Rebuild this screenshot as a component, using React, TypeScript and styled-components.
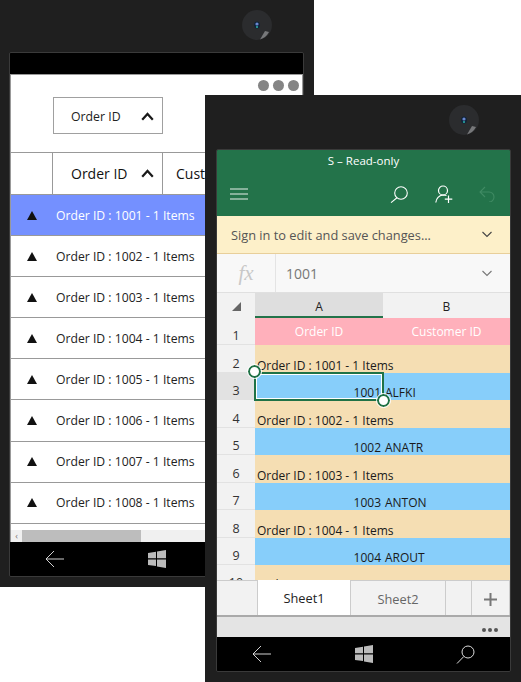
import styled, { createGlobalStyle } from "styled-components";

const GlobalStyle = createGlobalStyle`
  html, body {
    margin: 0;
    padding: 0;
    background: #fff;
    font-family: "Open Sans", "Noto Sans", sans-serif;
  }
`;

const Desktop = styled.div`
  position: relative;
  width: 521px;
  height: 682px;
  overflow: hidden;
  background: #fff;
`;

const Phone = styled.div<{ $x: number; $y: number; $w: number; $h: number }>`
  position: absolute;
  left: ${(p) => p.$x}px;
  top: ${(p) => p.$y}px;
  width: ${(p) => p.$w}px;
  height: ${(p) => p.$h}px;
  box-sizing: border-box;
  background: #1f1f1f;
  display: flex;
  flex-direction: column;
`;

const Camera = styled.svg`
  position: absolute;
  right: 42px;
  top: 10px;
  width: 30px;
  height: 30px;
`;

const Screen = styled.div<{ $left: number; $top: number; $w: number; $h: number }>`
  margin: ${(p) => p.$top}px 0 0 ${(p) => p.$left}px;
  width: ${(p) => p.$w}px;
  height: ${(p) => p.$h}px;
  box-sizing: border-box;
  border: 1px solid #3a3a3a;
  border-radius: 2px;
  overflow: hidden;
  display: flex;
  flex-direction: column;
`;

const NavBar = styled.div`
  background: #000;
  height: 34px;
  flex: none;
  display: grid;
  grid-template-columns: repeat(3, 102px);
  justify-content: center;
  align-items: center;
  justify-items: center;
`;

const StatusBar = styled.div`
  background: #000;
  height: 21px;
  flex: none;
`;

const GridApp = styled.div`
  flex: 1;
  min-height: 0;
  background: #fff;
  border: 1px solid #999;
  border-bottom: 0;
  display: flex;
  flex-direction: column;
  overflow: hidden;
`;

const Toolbar = styled.div`
  height: 77px;
  flex: none;
  position: relative;
  padding: 22px 0 0 42px;
  box-sizing: border-box;
`;

const Dots = styled.div`
  position: absolute;
  top: 5px;
  right: 3px;
  display: flex;
  gap: 4px;
`;

const Dot = styled.span`
  width: 11px;
  height: 11px;
  border-radius: 50%;
  background: #858585;
`;

const GroupChip = styled.div`
  width: 110px;
  height: 37px;
  box-sizing: border-box;
  border: 1px solid #a0a0a0;
  display: flex;
  align-items: center;
  justify-content: space-between;
  padding: 1px 8px 0 17px;
  font-size: 12.3px;
  color: #222;
`;

const HeaderRow = styled.div`
  height: 42px;
  flex: none;
  border-top: 1px solid #999;
  box-sizing: border-box;
  display: flex;
  width: 600px;
`;

const HeaderCell = styled.div<{ $w: number; $pad?: number }>`
  width: ${(p) => p.$w}px;
  flex: none;
  box-sizing: border-box;
  border-right: 1px solid #999;
  display: flex;
  align-items: center;
  justify-content: space-between;
  padding: 0 8px 0 ${(p) => p.$pad ?? 0}px;
  font-size: 14px;
  color: #111;
  white-space: nowrap;
`;

const GroupRow = styled.div<{ $selected?: boolean }>`
  height: 41.1px;
  flex: none;
  box-sizing: border-box;
  border-top: 1px solid #999;
  background: ${(p) => (p.$selected ? "#7490ff" : "#fff")};
  color: ${(p) => (p.$selected ? "#fff" : "#222")};
  display: flex;
  align-items: center;
  padding-left: 16px;
  font-size: 12.2px;
  white-space: nowrap;
`;

const Triangle = styled.span`
  width: 0;
  height: 0;
  border-left: 5px solid transparent;
  border-right: 5px solid transparent;
  border-bottom: 9px solid #111;
  margin-right: 19px;
`;

const ListEnd = styled.div`
  flex: 1;
  border-top: 1px solid #999;
`;

const ScrollBar = styled.div`
  height: 12px;
  flex: none;
  background: #f0f0f0;
  display: flex;
  align-items: center;
`;

const ScrollArrow = styled.span`
  width: 11px;
  font-size: 9px;
  line-height: 12px;
  text-align: center;
  color: #777;
`;

const ScrollThumb = styled.div`
  width: 119px;
  height: 12px;
  background: #bdbdbd;
`;

const TitleBar = styled.div`
  background: #23734a;
  color: #fff;
  height: 66px;
  flex: none;
  display: flex;
  flex-direction: column;
`;

const TitleText = styled.div`
  text-align: center;
  font-size: 11.5px;
  line-height: 21px;
`;

const TitleActions = styled.div`
  display: flex;
  align-items: center;
  padding: 14px 15px 0 13px;
`;

const ActionSpacer = styled.div`
  flex: 1;
`;

const UserAction = styled.svg`
  margin-left: 27px;
`;

const UndoAction = styled.svg`
  margin-left: 26px;
`;

const SignInBar = styled.div`
  height: 38px;
  flex: none;
  box-sizing: border-box;
  background: #fdf0c9;
  border-bottom: 1px solid #e8cf9a;
  display: flex;
  align-items: center;
  justify-content: space-between;
  padding: 0 18px 0 14px;
  font-size: 12.8px;
  color: #555;
`;

const FormulaBar = styled.div`
  height: 38px;
  flex: none;
  background: #f8f8f8;
  display: flex;
  align-items: center;
`;

const FxBox = styled.div`
  width: 59px;
  height: 100%;
  box-sizing: border-box;
  border-right: 1px solid #e4e4e4;
  display: flex;
  align-items: center;
  justify-content: center;
  font-family: "Liberation Serif", serif;
  font-style: italic;
  font-size: 21px;
  color: #c8c8c8;
`;

const FormulaValue = styled.div`
  flex: 1;
  padding-left: 10px;
  font-size: 14px;
  color: #777;
`;

const FormulaChevron = styled.div`
  padding-right: 18px;
  display: flex;
`;

const Sheet = styled.div`
  flex: 1;
  min-height: 0;
  overflow: hidden;
  display: grid;
  grid-template-columns: 38px 128px 127px;
  grid-auto-rows: 27.45px;
  grid-template-rows: 25px;
  border-top: 1px solid #e0e0e0;
  background: #f2f2f2;
  font-size: 12px;
  color: #222;
`;

const Corner = styled.div`
  display: flex;
  align-items: center;
  justify-content: center;
  background: #f2f2f2;
`;

const ColumnHead = styled.div<{ $active?: boolean }>`
  background: ${(p) => (p.$active ? "#dedede" : "#f2f2f2")};
  border-bottom: 2px solid ${(p) => (p.$active ? "#23734a" : "#f2f2f2")};
  display: flex;
  align-items: center;
  justify-content: center;
  padding-top: 3px;
  box-sizing: border-box;
  font-size: 12px;
  color: #222;
`;

const RowHead = styled.div<{ $active?: boolean }>`
  background: ${(p) => (p.$active ? "#e2e2e2" : "#f2f2f2")};
  border-bottom: 1px solid #e2e2e2;
  box-sizing: border-box;
  display: flex;
  align-items: flex-end;
  justify-content: center;
  line-height: 16px;
  font-size: 12.5px;
  color: #333;
`;

const Cell = styled.div<{ $bg: string; $align?: string; $color?: string; $span?: number; $selected?: boolean }>`
  position: relative;
  grid-column: span ${(p) => p.$span ?? 1};
  z-index: ${(p) => (p.$selected ? 2 : "auto")};
  background: ${(p) => p.$bg};
  color: ${(p) => p.$color ?? "#1a1a1a"};
  display: flex;
  align-items: flex-end;
  justify-content: ${(p) => p.$align ?? "flex-start"};
  padding: 0 2px;
  box-sizing: border-box;
  white-space: nowrap;
  line-height: 16px;
`;

const CellText = styled.span`
  padding-bottom: 0;
  transform: translateY(1px);
`;

const HeadCellLabel = styled.div`
  width: 100%;
  text-align: center;
  padding-bottom: 5px;
`;

const Selection = styled.div`
  position: absolute;
  inset: -1px;
  border: 2px solid #1f7246;
  box-shadow: inset 0 0 0 1px #fff;
  pointer-events: none;
`;

const Handle = styled.span<{ $end?: boolean }>`
  position: absolute;
  width: 9px;
  height: 9px;
  border: 2px solid #1f7246;
  outline: 1px solid #fff;
  border-radius: 50%;
  background: #fff;
  ${(p) => (p.$end ? "right: -7.5px; bottom: -7.5px;" : "left: -8.5px; top: -8.5px;")}
`;

const TabBar = styled.div`
  height: 37px;
  flex: none;
  background: #f2f2f2;
  display: flex;
  border-top: 1px solid #ccc;
  border-bottom: 2px solid #aaa;
  box-sizing: border-box;
`;

const Tab = styled.div<{ $w: number; $active?: boolean }>`
  width: ${(p) => p.$w}px;
  flex: none;
  box-sizing: border-box;
  background: ${(p) => (p.$active ? "#fff" : "#f2f2f2")};
  color: ${(p) => (p.$active ? "#222" : "#666")};
  border-right: 1px solid #ccc;
  display: flex;
  align-items: center;
  justify-content: center;
  font-size: 12.8px;
  padding-top: ${(p) => (p.$active ? 0 : 2)}px;
  ${(p) => (p.$active ? "margin-top: -1px;" : "")}
`;

const MoreBar = styled.div`
  height: 20px;
  flex: none;
  box-sizing: border-box;
  background: #e4e4e4;
  display: flex;
  align-items: center;
  justify-content: flex-end;
  gap: 2px;
  padding: 6px 12px 0 0;
`;

const MoreDot = styled.span`
  width: 4px;
  height: 4px;
  border-radius: 50%;
  background: #555;
`;

const orderRows = [1001, 1002, 1003, 1004, 1005, 1006, 1007, 1008];

const sheetRows = [
  { group: 1001, customer: "ALFKI" },
  { group: 1002, customer: "ANATR" },
  { group: 1003, customer: "ANTON" },
  { group: 1004, customer: "AROUT" },
];

function CameraLens() {
  return (
    <Camera viewBox="0 0 30 30">
      <circle cx="15" cy="15" r="15" fill="#2b2c2e" />
      <path d="M27 22 A15 15 0 0 1 18 29.5 L23 21 Z" fill="#77787a" />
      <ellipse cx="15" cy="15" rx="3" ry="3.6" fill="#10233a" />
      <circle cx="15" cy="14" r="1.6" fill="#6a88d0" />
      <circle cx="15" cy="17" r="1.1" fill="#2aa8a0" />
    </Camera>
  );
}

function CaretUp() {
  return (
    <svg width="13" height="9" viewBox="0 0 13 9" fill="none">
      <path d="M1.2 7.8 L6.5 2 L11.8 7.8" stroke="#1a1a1a" strokeWidth="2.2" />
    </svg>
  );
}

function ChevronDown({ color }: { color: string }) {
  return (
    <svg width="10" height="7" viewBox="0 0 10 7" fill="none">
      <path d="M0.5 1 L5 5.5 L9.5 1" stroke={color} strokeWidth="1.1" />
    </svg>
  );
}

function NavIcons() {
  return (
    <NavBar>
      <svg width="19" height="18" viewBox="0 0 19 18" fill="none" stroke="#e8e8e8" strokeWidth="0.9">
        <path d="M19 9 H1 M9 1 L1 9 L9 17" />
      </svg>
      <svg width="18" height="18" viewBox="0 0 18 18" fill="#bbb">
        <path d="M0 3 L8 1.8 V8.3 H0 Z M9 1.6 L18 0 V8.3 H9 Z M0 9.5 H8 V16 L0 14.9 Z M9 9.5 H18 V18 L9 16.4 Z" />
      </svg>
      <svg width="19" height="19" viewBox="0 0 19 19" fill="none" stroke="#ddd" strokeWidth="1">
        <circle cx="12" cy="7" r="6" />
        <path d="M7.8 11.5 L1 18.5" />
      </svg>
    </NavBar>
  );
}

function GridPhone() {
  return (
    <Phone $x={0} $y={0} $w={314} $h={587}>
      <CameraLens />
      <Screen $left={9} $top={52} $w={295} $h={525}>
        <StatusBar />
        <GridApp>
          <Toolbar>
            <Dots>
              <Dot />
              <Dot />
              <Dot />
            </Dots>
            <GroupChip>
              Order ID
              <CaretUp />
            </GroupChip>
          </Toolbar>
          <HeaderRow>
            <HeaderCell $w={42} />
            <HeaderCell $w={110} $pad={18}>
              Order ID
              <CaretUp />
            </HeaderCell>
            <HeaderCell $w={110} $pad={13}>
              Customer ID
            </HeaderCell>
          </HeaderRow>
          {orderRows.map((id, i) => (
            <GroupRow key={id} $selected={i === 0}>
              <Triangle />
              Order ID : {id} - 1 Items
            </GroupRow>
          ))}
          <ListEnd />
          <ScrollBar>
            <ScrollArrow>‹</ScrollArrow>
            <ScrollThumb />
          </ScrollBar>
        </GridApp>
        <NavIcons />
      </Screen>
    </Phone>
  );
}

function ExcelPhone() {
  let rowNumber = 2;
  return (
    <Phone $x={205} $y={95} $w={316} $h={587}>
      <CameraLens />
      <Screen $left={11} $top={54} $w={295} $h={523}>
        <TitleBar>
          <TitleText>S – Read-only</TitleText>
          <TitleActions>
            <svg width="18" height="12" viewBox="0 0 18 12" stroke="#e8f0ea" strokeWidth="1">
              <path d="M0 1 H18 M0 6 H18 M0 11 H18" />
            </svg>
            <ActionSpacer />
            <svg width="18" height="17" viewBox="0 0 18 17" fill="none" stroke="#fff" strokeWidth="1.1">
              <circle cx="11" cy="7" r="6.3" />
              <path d="M7 11.8 L1 16.6" />
            </svg>
            <UserAction width="18" height="18" viewBox="0 0 18 18" fill="none" stroke="#fff" strokeWidth="1.2">
              <circle cx="8" cy="5.5" r="4.5" />
              <path d="M0.8 17.5 C1.5 12.5 4.5 10.5 8 10 L11.5 10.5 M13.5 10.5 V18 M9.8 14.2 H17.3" />
            </UserAction>
            <UndoAction width="16" height="16" viewBox="0 0 16 16" fill="none" stroke="#3f8a63" strokeWidth="1.1">
              <path d="M6 1 L1 6 L6 11 M1 6 H10 A5 5 0 0 1 10 16" />
            </UndoAction>
          </TitleActions>
        </TitleBar>
        <SignInBar>
          Sign in to edit and save changes...
          <ChevronDown color="#444" />
        </SignInBar>
        <FormulaBar>
          <FxBox>fx</FxBox>
          <FormulaValue>1001</FormulaValue>
          <FormulaChevron>
            <ChevronDown color="#777" />
          </FormulaChevron>
        </FormulaBar>
        <Sheet>
          <Corner>
            <svg width="10" height="10" viewBox="0 0 10 10">
              <path d="M10 1 V10 H1 Z" fill="#666" />
            </svg>
          </Corner>
          <ColumnHead $active>A</ColumnHead>
          <ColumnHead>B</ColumnHead>

          <RowHead>1</RowHead>
          <Cell $bg="#ffb0bb" $color="#fff">
            <HeadCellLabel>Order ID</HeadCellLabel>
          </Cell>
          <Cell $bg="#ffb0bb" $color="#fff">
            <HeadCellLabel>Customer ID</HeadCellLabel>
          </Cell>

          {sheetRows.map((row, i) => {
            const groupNo = rowNumber++;
            const dataNo = rowNumber++;
            return [
              <RowHead key={`g${row.group}`}>{groupNo}</RowHead>,
              <Cell key={`ga${row.group}`} $bg="#f5deb3" $span={2}>
                <CellText>Order ID : {row.group} - 1 Items</CellText>
              </Cell>,
              <RowHead key={`d${row.group}`} $active={i === 0}>
                {dataNo}
              </RowHead>,
              <Cell key={`da${row.group}`} $bg="#87cefa" $align="flex-end" $selected={i === 0}>
                <CellText>{row.group}</CellText>
                {i === 0 && (
                  <Selection>
                    <Handle />
                    <Handle $end />
                  </Selection>
                )}
              </Cell>,
              <Cell key={`db${row.group}`} $bg="#87cefa">
                <CellText>{row.customer}</CellText>
              </Cell>,
            ];
          })}
          <RowHead>10</RowHead>
          <Cell $bg="#f5deb3" $span={2}>
            <CellText>Order ID : 1005 - 1 Items</CellText>
          </Cell>
        </Sheet>
        <TabBar>
          <Tab $w={41} />
          <Tab $w={93} $active>
            Sheet1
          </Tab>
          <Tab $w={95}>Sheet2</Tab>
          <Tab $w={26} />
          <Tab $w={38}>
            <svg width="13" height="13" viewBox="0 0 13 13" stroke="#777" strokeWidth="2">
              <path d="M6.5 0 V13 M0 6.5 H13" />
            </svg>
          </Tab>
        </TabBar>
        <MoreBar>
          <MoreDot />
          <MoreDot />
          <MoreDot />
        </MoreBar>
        <NavIcons />
      </Screen>
    </Phone>
  );
}

export default function App() {
  return (
    <>
      <GlobalStyle />
      <Desktop>
        <GridPhone />
        <ExcelPhone />
      </Desktop>
    </>
  );
}
